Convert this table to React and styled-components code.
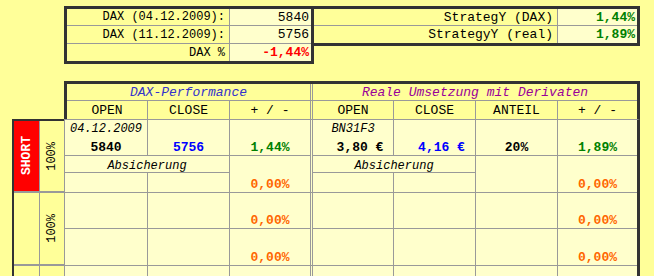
import React from "react";
import styled, { createGlobalStyle } from "styled-components";

const DARK = "#333333";
const LINE = "#999999";
const PALE = "#ffffcc";
const YELLOW = "#ffff99";

const GlobalStyle = createGlobalStyle`
  html, body {
    margin: 0;
    padding: 0;
    background: ${YELLOW};
    overflow: hidden;
  }
  body {
    font-family: "Liberation Mono", "Courier New", monospace;
    font-size: 13px;
    color: #000;
  }
`;

const COLS = "80px 81px 80px 1px 80px 81px 81px 79px";

// lower groups: only the +/- columns carry a value
function EmptyGroup({ showValues }) {
  const zero = showValues ? <Value $color="#ff6600">0,00%</Value> : null;
  return (
    <Group>
      <Cell />
      <Cell />
      <Cell>{zero}</Cell>
      <Spacer />
      <Cell />
      <Cell />
      <Cell />
      <Cell>{zero}</Cell>

      <Cell $rows={2} />
      <Cell $rows={2} />
      <Cell $rows={2}>{zero}</Cell>
      <Cell $rows={2} />
      <Cell $rows={2} />
      <Cell $rows={2} />
      <Cell $rows={2}>{zero}</Cell>
    </Group>
  );
}

function App() {
  return (
    <Page>
      <GlobalStyle />
      <TopRow>
        <Summary $cols="162px 81px" $rows="16px 17px 17px">
          <SumLabel $size={12}>DAX (04.12.2009):</SumLabel>
          <SumValue>5840</SumValue>
          <SumLabel $size={12}>DAX (11.12.2009):</SumLabel>
          <SumValue>5756</SumValue>
          <SumLabel $size={12}>DAX %</SumLabel>
          <SumValue $bold $color="#ff0000">-1,44%</SumValue>
        </Summary>
        <Summary $cols="243px 79px" $rows="16px 17px" $noLeft>
          <SumLabel>StrategY (DAX)</SumLabel>
          <SumValue $bold $color="#008000">1,44%</SumValue>
          <SumLabel>StrategyY (real)</SumLabel>
          <SumValue $bold $color="#008000">1,89%</SumValue>
        </Summary>
      </TopRow>

      <Main>
        <Header>
          <HeadCell $span={3} $italic $color="#3333cc">DAX-Performance</HeadCell>
          <HeadCell />
          <HeadCell $span={4} $italic $color="#990099">Reale Umsetzung mit Derivaten</HeadCell>
          <HeadCell>OPEN</HeadCell>
          <HeadCell>CLOSE</HeadCell>
          <HeadCell>+ / -</HeadCell>
          <HeadCell />
          <HeadCell>OPEN</HeadCell>
          <HeadCell>CLOSE</HeadCell>
          <HeadCell>ANTEIL</HeadCell>
          <HeadCell>+ / -</HeadCell>
        </Header>

        <Body>
          <Rail>
            <RailCell $bg="#ff0000">
              <Vertical $bold $color="#ffffff">SHORT</Vertical>
            </RailCell>
            <RailCell>
              <Vertical>100%</Vertical>
            </RailCell>
            <RailCell />
            <RailCell>
              <Vertical>100%</Vertical>
            </RailCell>
            <RailCell />
            <RailCell />
          </Rail>

          <DataBody>
            <Group>
              <Cell $justify="space-between">
                <Small>04.12.2009</Small>
                <Value>5840</Value>
              </Cell>
              <Cell><Value $color="#0000ff">5756</Value></Cell>
              <Cell><Value $color="#008000">1,44%</Value></Cell>
              <Spacer />
              <Cell $justify="space-between">
                <Small>BN31F3</Small>
                <Value $shift={14}>3,80 €</Value>
              </Cell>
              <Cell><Value $shift={14} $color="#0000ff">4,16 €</Value></Cell>
              <Cell><Value>20%</Value></Cell>
              <Cell><Value $color="#008000">1,89%</Value></Cell>

              <Cell $span={2} $justify="flex-start"><Note>Absicherung</Note></Cell>
              <Cell $rows={2}><Value $color="#ff6600">0,00%</Value></Cell>
              <Cell $span={2} $justify="flex-start"><Note>Absicherung</Note></Cell>
              <Cell $rows={2} />
              <Cell $rows={2}><Value $color="#ff6600">0,00%</Value></Cell>
              <Cell />
              <Cell />
              <Cell />
              <Cell />
            </Group>

            <EmptyGroup showValues />
            <EmptyGroup />
          </DataBody>
        </Body>
      </Main>
    </Page>
  );
}

export default App;

const Page = styled.div`
  width: 654px;
  height: 276px;
  box-sizing: border-box;
  padding: 6px 0 0 12px;
  overflow: hidden;
`;

const TopRow = styled.div`
  display: flex;
  align-items: flex-start;
  margin-left: 52px;
`;

const Summary = styled.div`
  display: grid;
  grid-template-columns: ${(p) => p.$cols};
  grid-template-rows: ${(p) => p.$rows};
  gap: 1px;
  background: ${LINE};
  border: 3px solid ${DARK};
  border-left-width: ${(p) => (p.$noLeft ? 0 : 3)}px;
`;

const SumLabel = styled.div`
  background: ${YELLOW};
  display: flex;
  align-items: center;
  justify-content: flex-end;
  padding-right: 4px;
  font-size: ${(p) => p.$size || 13}px;
  white-space: pre;
`;

const SumValue = styled.div`
  background: ${PALE};
  display: flex;
  align-items: center;
  justify-content: flex-end;
  padding-right: 2px;
  font-weight: ${(p) => (p.$bold ? 700 : 400)};
  color: ${(p) => p.$color || "#000"};
`;

const Main = styled.div`
  margin-top: 17px;
`;

const Header = styled.div`
  margin-left: 52px;
  width: max-content;
  display: grid;
  grid-template-columns: ${COLS};
  grid-template-rows: 16px 18px;
  gap: 1px;
  background: ${LINE};
  border: 3px solid ${DARK};
  border-bottom: 0;
`;

const HeadCell = styled.div`
  grid-column: span ${(p) => p.$span || 1};
  background: ${YELLOW};
  display: flex;
  align-items: center;
  justify-content: center;
  white-space: pre;
  font-style: ${(p) => (p.$italic ? "italic" : "normal")};
  color: ${(p) => p.$color || "#000"};
`;

const Body = styled.div`
  display: flex;
  align-items: flex-start;
`;

const Rail = styled.div`
  display: grid;
  grid-template-columns: 25px 24px;
  grid-template-rows: 70px 71px 71px;
  gap: 2px 1px;
  background: ${LINE};
  border-top: 2px solid ${DARK};
  border-left: 2px solid ${DARK};
`;

const RailCell = styled.div`
  background: ${(p) => p.$bg || YELLOW};
  display: flex;
  align-items: center;
  justify-content: center;
`;

const Vertical = styled.span`
  writing-mode: vertical-rl;
  transform: rotate(180deg);
  font-size: ${(p) => (p.$bold ? 13 : 12)}px;
  font-weight: ${(p) => (p.$bold ? 700 : 400)};
  color: ${(p) => p.$color || "#000"};
`;

const DataBody = styled.div`
  display: flex;
  flex-direction: column;
  gap: 1px;
  background: ${LINE};
  border-top: 1px solid ${LINE};
  border-left: 1px solid ${LINE};
  border-right: 3px solid ${DARK};
`;

const Group = styled.div`
  display: grid;
  grid-template-columns: 82px 81px 80px 1px 80px 81px 81px 79px;
  grid-template-rows: 35px 16px 19px;
  gap: 1px;
`;

const Cell = styled.div`
  grid-column: span ${(p) => p.$span || 1};
  grid-row: span ${(p) => p.$rows || 1};
  background: ${PALE};
  display: flex;
  flex-direction: column;
  align-items: center;
  justify-content: ${(p) => p.$justify || "flex-end"};
  padding-top: ${(p) => (p.$justify ? 2 : 0)}px;
  box-sizing: border-box;
`;

const Spacer = styled.div`
  grid-row: span 3;
  background: ${PALE};
`;

const Small = styled.span`
  font-size: 12px;
  font-style: italic;
  line-height: 14px;
`;

const Note = styled(Small)`
  line-height: 17px;
`;

const Value = styled.span`
  font-weight: 700;
  line-height: 15px;
  white-space: pre;
  padding-left: ${(p) => p.$shift || 0}px;
  color: ${(p) => p.$color || "#000"};
`;
